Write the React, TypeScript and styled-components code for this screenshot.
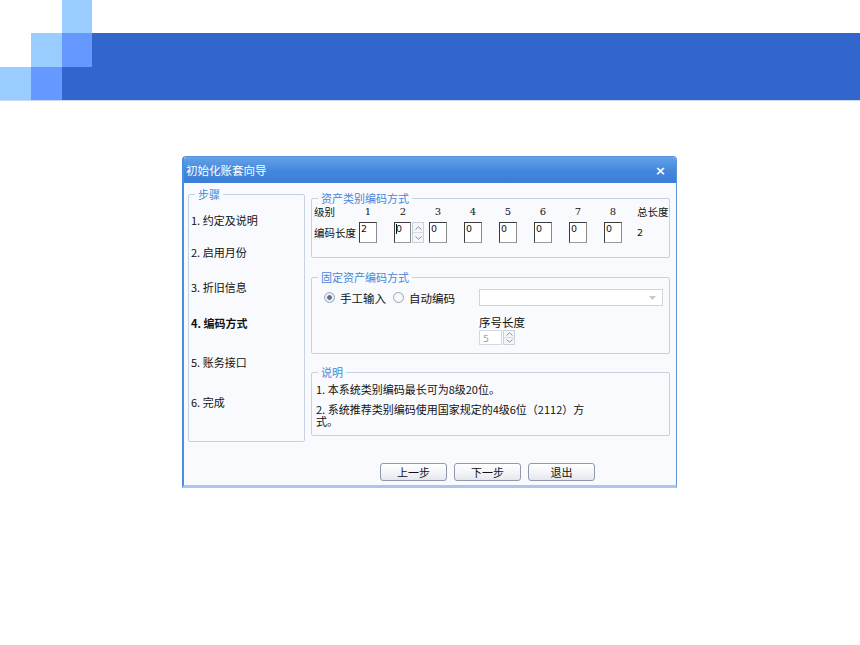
import React from 'react'
import styled, { createGlobalStyle } from 'styled-components'

const GlobalStyle = createGlobalStyle`
  html, body { margin: 0; padding: 0; background: #ffffff; }
  body { font-family: "Noto Sans CJK SC", "Liberation Sans", sans-serif; font-size: 11px; color: #111; }
`

const Page = styled.div`
  width: 860px;
  height: 645px;
  overflow: hidden;
  background: #fff;
`

const Banner = styled.header`
  display: grid;
  grid-template-columns: 31px 31px 30px 1fr;
  grid-template-rows: 33px 34px 33px;
  height: 100px;
  border-bottom: 1px solid #c7d8f3;
`

const Tile = styled.div<{ $tone: 'light' | 'mid' | 'dark'; $area: string }>`
  grid-area: ${p => p.$area};
  background: ${p => (p.$tone === 'light' ? '#99ccff' : p.$tone === 'mid' ? '#6699ff' : '#3366cc')};
`

const Stage = styled.main`
  display: flex;
  padding: 55px 0 0 182px;
`

const Dialog = styled.section`
  width: 495px;
  height: 332px;
  display: flex;
  flex-direction: column;
  background: #f8fafd;
  border: 1px solid #5d93d8;
  border-left: 2px solid #4a8ee3;
  border-bottom: 3px solid #a9c6ec;
  border-radius: 4px 4px 0 0;
  box-sizing: border-box;
`

const TitleBar = styled.div`
  height: 26px;
  flex: none;
  display: flex;
  align-items: center;
  justify-content: space-between;
  padding: 0 10px 0 2px;
  background: linear-gradient(#64a3ea, #4286dc 55%, #3a7ed6);
  color: #fff;
  font-size: 11.5px;
  border-radius: 3px 3px 0 0;
`

const Close = styled.span`
  font-family: "DejaVu Sans", sans-serif;
  font-weight: bold;
  font-size: 13px;
`

const Body = styled.div`
  flex: 1;
  display: flex;
  flex-direction: column;
  padding: 5px 8px 0 4px;
`

const Columns = styled.div`
  display: flex;
  gap: 6px;
`

const Group = styled.fieldset<{ $h: number }>`
  margin: 0;
  padding: 0;
  min-width: 0;
  height: ${p => p.$h}px;
  box-sizing: border-box;
  border: 1px solid #c6d2e2;
  border-radius: 2px;
  position: relative;
`

const Legend = styled.legend`
  margin-left: 6px;
  padding: 0 3px;
  color: #4a86d8;
  font-size: 11px;
  line-height: 12px;
  white-space: nowrap;
`

const StepBox = styled(Group)`
  width: 117px;
  flex: none;
`

const StepList = styled.ol`
  list-style: none;
  margin: 0;
  padding: 14px 0 0 2px;
  display: flex;
  flex-direction: column;
`

const Step = styled.li<{ $active?: boolean; $gap: number }>`
  height: 12px;
  line-height: 12px;
  margin-bottom: ${p => p.$gap}px;
  font-weight: ${p => (p.$active ? 'bold' : 'normal')};
  font-size: 11px;
  color: #111;
  white-space: nowrap;
`

const Right = styled.div`
  width: 359px;
  display: flex;
  flex-direction: column;
  padding-top: 4px;
`

const CodeGrid = styled.div`
  display: grid;
  grid-template-columns: 46px repeat(7, 35px) 32px auto;
  grid-template-rows: 12px 21px;
  row-gap: 4px;
  padding: 2px 0 0 1px;
  align-items: center;
`

const HeadCell = styled.span<{ $num?: boolean }>`
  width: ${p => (p.$num ? '18px' : 'auto')};
  text-align: ${p => (p.$num ? 'center' : 'left')};
  font-family: ${p => (p.$num ? '"DejaVu Serif", serif' : 'inherit')};
  font-size: ${p => (p.$num ? '10px' : '10.5px')};
  line-height: 12px;
  padding-left: ${p => (p.$num ? '0' : '1px')};
  white-space: nowrap;
`

const InputWrap = styled.div`
  display: flex;
  align-items: center;
  gap: 1px;
`

const NumInput = styled.div<{ $w?: number; $disabled?: boolean }>`
  width: ${p => p.$w ?? 18}px;
  height: ${p => (p.$disabled ? 15 : 21)}px;
  box-sizing: border-box;
  background: #fff;
  border: 1px solid ${p => (p.$disabled ? '#d3d9e2' : '#3c3c3c')};
  border-right-color: ${p => (p.$disabled ? '#d3d9e2' : '#8a8a8a')};
  border-bottom-color: ${p => (p.$disabled ? '#d3d9e2' : '#9a9a9a')};
  color: ${p => (p.$disabled ? '#9aa4b0' : '#111')};
  font-family: "DejaVu Sans", sans-serif;
  font-size: 9.5px;
  line-height: 11px;
  padding: ${p => (p.$disabled ? '2px 0 0 3px' : '0 0 0 1px')};
  position: relative;
`

const Caret = styled.span`
  position: absolute;
  left: 1px;
  top: 1px;
  width: 1px;
  height: 10px;
  background: #111;
`

const Spinner = styled.div<{ $h: number }>`
  width: 12px;
  height: ${p => p.$h}px;
  display: flex;
  flex-direction: column;
  border: 1px solid #c9d1dc;
  box-sizing: border-box;
  background: #f4f6f9;
`

const SpinHalf = styled.div`
  flex: 1;
  display: flex;
  align-items: center;
  justify-content: center;
  & + & { border-top: 1px solid #d6dce5; }
`

const Total = styled.span`
  font-family: "DejaVu Sans", sans-serif;
  font-size: 9.5px;
  padding-left: 1px;
`

const FixedGrid = styled.div`
  display: grid;
  grid-template-columns: 155px 185px;
  grid-template-rows: 17px auto;
  row-gap: 10px;
  padding: 6px 0 0 12px;
  align-items: center;
`

const RadioRow = styled.div`
  display: flex;
  align-items: center;
  gap: 5px;
`

const Radio = styled.span<{ $on?: boolean }>`
  width: 11px;
  height: 11px;
  border-radius: 50%;
  box-sizing: border-box;
  border: 1px solid #9ba7b6;
  background: radial-gradient(circle, ${p => (p.$on ? '#5f6f83 0 2px, #e6ebf1 2.5px' : '#fff 0, #eef1f5 100%')});
  flex: none;
`

const RadioLabel = styled.span`
  font-size: 11.5px;
  margin-right: 2px;
  white-space: nowrap;
`

const Select = styled.div`
  width: 184px;
  height: 17px;
  box-sizing: border-box;
  border: 1px solid #cdd5df;
  background: #fff;
  display: flex;
  align-items: center;
  justify-content: flex-end;
  padding-right: 6px;
`

const SeqBox = styled.div`
  grid-column: 2;
  display: flex;
  flex-direction: column;
  gap: 1px;
`

const SeqLabel = styled.span`
  font-size: 11.5px;
  line-height: 13px;
`

const Notes = styled.div`
  padding: 5px 0 0 4px;
  display: flex;
  flex-direction: column;
  gap: 8px;
  width: 278px;
`

const Note = styled.p`
  margin: 0;
  font-size: 11px;
  line-height: 12px;
`

const Footer = styled.div`
  display: flex;
  justify-content: flex-end;
  gap: 7px;
  padding: 21px 73px 0 0;
`

const Button = styled.button`
  width: 67px;
  height: 18px;
  padding: 0;
  border: 1px solid #8e9aab;
  border-radius: 3px;
  background: linear-gradient(#ffffff, #f1f3f6 60%, #e3e7ec);
  font-family: "Noto Sans CJK SC", sans-serif;
  font-size: 11px;
  line-height: 16px;
  color: #111;
`

const Chevron = ({ up }: { up?: boolean }) => (
  <svg width="7" height="4" viewBox="0 0 7 4">
    <path d={up ? 'M0.5 3.5 L3.5 0.8 L6.5 3.5' : 'M0.5 0.5 L3.5 3.2 L6.5 0.5'} fill="none" stroke="#8592a3" strokeWidth="1" />
  </svg>
)

const SpinBox = ({ h }: { h: number }) => (
  <Spinner $h={h}>
    <SpinHalf><Chevron up /></SpinHalf>
    <SpinHalf><Chevron /></SpinHalf>
  </Spinner>
)

const steps = [
  { label: '1. 约定及说明', gap: 20 },
  { label: '2. 启用月份', gap: 23 },
  { label: '3. 折旧信息', gap: 24 },
  { label: '4. 编码方式', gap: 27, active: true },
  { label: '5. 账务接口', gap: 28 },
  { label: '6. 完成', gap: 0 },
]

const levels = ['2', '0', '0', '0', '0', '0', '0', '0']

export default function App() {
  return (
    <Page>
      <GlobalStyle />
      <Banner>
        <Tile $tone="light" $area="1 / 3" />
        <Tile $tone="light" $area="2 / 2" />
        <Tile $tone="mid" $area="2 / 3" />
        <Tile $tone="dark" $area="2 / 4" />
        <Tile $tone="light" $area="3 / 1" />
        <Tile $tone="mid" $area="3 / 2" />
        <Tile $tone="dark" $area="3 / 3 / 4 / 5" />
      </Banner>
      <Stage>
        <Dialog>
          <TitleBar>
            <span>初始化账套向导</span>
            <Close>×</Close>
          </TitleBar>
          <Body>
            <Columns>
              <StepBox $h={254}>
                <Legend>步骤</Legend>
                <StepList>
                  {steps.map(s => (
                    <Step key={s.label} $active={s.active} $gap={s.gap}>{s.label}</Step>
                  ))}
                </StepList>
              </StepBox>
              <Right>
                <Group $h={66}>
                  <Legend>资产类别编码方式</Legend>
                  <CodeGrid>
                    <HeadCell>级别</HeadCell>
                    {levels.map((_, i) => (
                      <HeadCell key={i} $num>{i + 1}</HeadCell>
                    ))}
                    <HeadCell>总长度</HeadCell>
                    <HeadCell>编码长度</HeadCell>
                    {levels.map((v, i) =>
                      i === 1 ? (
                        <InputWrap key={i}>
                          <NumInput $w={17}>{v}<Caret /></NumInput>
                          <SpinBox h={21} />
                        </InputWrap>
                      ) : (
                        <NumInput key={i}>{v}</NumInput>
                      )
                    )}
                    <Total>2</Total>
                  </CodeGrid>
                </Group>
                <Group $h={83} style={{ marginTop: 13 }}>
                  <Legend>固定资产编码方式</Legend>
                  <FixedGrid>
                    <RadioRow>
                      <Radio $on />
                      <RadioLabel>手工输入</RadioLabel>
                      <Radio />
                      <RadioLabel>自动编码</RadioLabel>
                    </RadioRow>
                    <Select>
                      <svg width="7" height="4" viewBox="0 0 7 4">
                        <path d="M0 0 L7 0 L3.5 4 Z" fill="#c3cad4" />
                      </svg>
                    </Select>
                    <SeqBox>
                      <SeqLabel>序号长度</SeqLabel>
                      <InputWrap>
                        <NumInput $w={23} $disabled>5</NumInput>
                        <SpinBox h={15} />
                      </InputWrap>
                    </SeqBox>
                  </FixedGrid>
                </Group>
                <Group $h={70} style={{ marginTop: 12 }}>
                  <Legend>说明</Legend>
                  <Notes>
                    <Note>1. 本系统类别编码最长可为8级20位。</Note>
                    <Note>2. 系统推荐类别编码使用国家规定的4级6位（2112）方式。</Note>
                  </Notes>
                </Group>
              </Right>
            </Columns>
            <Footer>
              <Button>上一步</Button>
              <Button>下一步</Button>
              <Button>退出</Button>
            </Footer>
          </Body>
        </Dialog>
      </Stage>
    </Page>
  )
}
